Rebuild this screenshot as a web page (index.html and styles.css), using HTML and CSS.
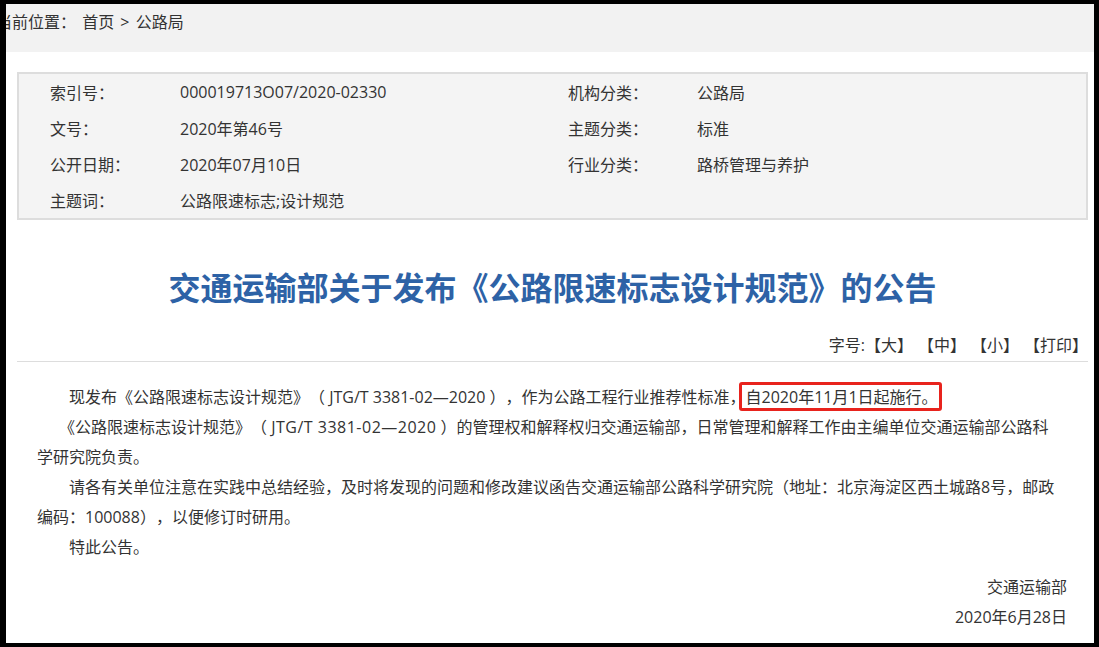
FILE: index.html
```html
<!DOCTYPE html>
<html lang="zh-CN">
<head>
    <meta charset="UTF-8">
    <meta name="viewport" content="width=device-width, initial-scale=1.0">
    <title>交通运输部关于发布《公路限速标志设计规范》的公告</title>
    <link rel="stylesheet" href="styles.css">
</head>
<body>
    <div class="screen">
        <div class="crumb">当前位置： <a href="#">首页</a> &gt; <a href="#">公路局</a></div>

        <div class="main">
            <div class="meta">
                <span class="label">索引号：</span>
                <span>000019713O07/2020-02330</span>
                <span class="label">机构分类：</span>
                <span>公路局</span>

                <span class="label">文号：</span>
                <span>2020年第46号</span>
                <span class="label">主题分类：</span>
                <span>标准</span>

                <span class="label">公开日期：</span>
                <span>2020年07月10日</span>
                <span class="label">行业分类：</span>
                <span>路桥管理与养护</span>

                <span class="label">主题词：</span>
                <span>公路限速标志;设计规范</span>
                <span></span>
                <span></span>
            </div>

            <h1 class="title">交通运输部关于发布《公路限速标志设计规范》的公告</h1>

            <div class="tools">字号:<a href="#">【大】</a><a href="#">【中】</a><a href="#">【小】</a><a href="#">【打印】</a></div>

            <div class="article">
                <p>现发布《公路限速标志设计规范》（ <span class="code">JTG/T 3381-02—2020</span> ），作为公路工程行业推荐性标准，<span class="mark">自2020年11月1日起施行。</span></p>
                <p class="quote">《公路限速标志设计规范》（ <span class="code">JTG/T 3381-02—2020</span> ）的管理权和解释权归交通运输部，日常管理和解释工作由主编单位交通运输部公路科学研究院负责。</p>
                <p>请各有关单位注意在实践中总结经验，及时将发现的问题和修改建议函告交通运输部公路科学研究院（地址：北京海淀区西土城路8号，邮政编码：100088），以便修订时研用。</p>
                <p>特此公告。</p>
                <p class="sign first">交通运输部</p>
                <p class="sign">2020年6月28日</p>
            </div>
        </div>
    </div>
</body>
</html>
```

FILE: styles.css
```css
* {
    margin: 0;
    padding: 0;
    box-sizing: border-box;
}

html, body {
    height: 100%;
}

body {
    background-color: #000;
    padding: 4px 5px 4px 6px;
    font-family: "Open Sans", "Noto Sans CJK SC", sans-serif;
    font-size: 16px;
    color: #333;
    text-spacing-trim: space-all;
}

a {
    color: #333;
    text-decoration: none;
}

.screen {
    height: 639px;
    background-color: white;
    overflow: hidden;
}

.crumb {
    height: 48px;
    line-height: 36px;
    background-color: #f2f2f2;
    text-indent: -10px;
    white-space: nowrap;
    word-spacing: 2px;
}

.main {
    margin: 20px 6px 0 11px;
}

.meta {
    display: grid;
    grid-template-columns: 130px 388px 129px 1fr;
    grid-auto-rows: 36px;
    align-items: center;
    padding-left: 31px;
    background-color: #f4f4f4;
    border: 2px solid #dddddd;
}

.title {
    margin-top: 48px;
    line-height: 40px;
    font-size: 32px;
    font-weight: bold;
    color: #2d62a6;
    text-align: center;
}

.tools {
    margin-top: 22px;
    line-height: 30px;
    text-align: right;
    border-bottom: 1px solid #dddddd;
    padding-bottom: 1px;
}

.tools a {
    margin-left: 5px;
}

.tools a:first-child {
    margin-left: 0;
}

.article {
    padding: 20px 28px 0 20px;
    line-height: 30px;
}

.article p {
    text-indent: 2em;
}

.article .quote {
    text-indent: 22px;
}

.quote .code {
    letter-spacing: 0.5px;
}

.mark {
    position: relative;
}

.mark::after {
    content: "";
    position: absolute;
    top: -4px;
    bottom: -3px;
    left: -7px;
    right: -4px;
    border: 3px solid #e8231d;
    border-radius: 3px;
}

.article .sign {
    margin-right: -7px;
    text-align: right;
    text-indent: 0;
}

.article .sign.first {
    margin-top: 10px;
}
```
